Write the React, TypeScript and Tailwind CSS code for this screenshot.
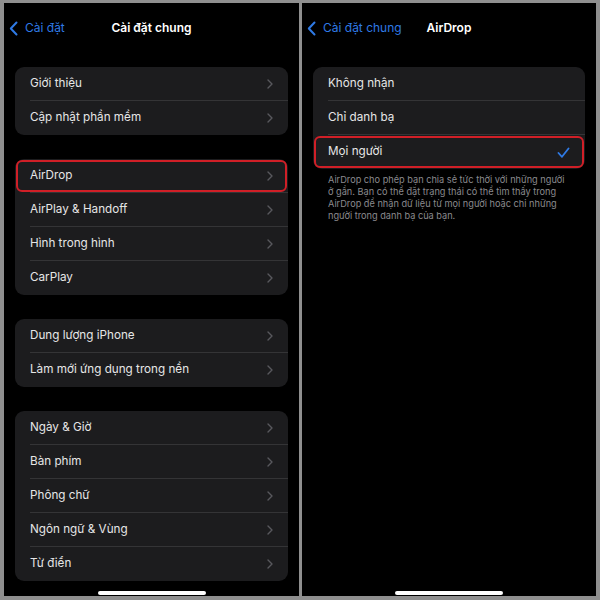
import React from 'react';

const font = { fontFamily: 'Inter, "Noto Sans", sans-serif' };

function Chevron() {
  return (
    <svg width="6" height="10" viewBox="0 0 6 10" className="shrink-0">
      <path d="M1 1l4 4-4 4" fill="none" stroke="#58585d" strokeWidth="1.4" strokeLinecap="round" strokeLinejoin="round" />
    </svg>
  );
}

function BackChevron() {
  return (
    <svg width="9" height="15" viewBox="0 0 9 15" className="shrink-0">
      <path d="M7.5 1.5L1.8 7.5l5.7 6" fill="none" stroke="#2f7ae5" strokeWidth="2" strokeLinecap="round" strokeLinejoin="round" />
    </svg>
  );
}

function Check() {
  return (
    <svg width="13" height="11" viewBox="0 0 13 11">
      <path d="M1.5 6l3.5 3.8L11.5 1.5" fill="none" stroke="#2f7ae5" strokeWidth="1.8" strokeLinecap="round" strokeLinejoin="round" />
    </svg>
  );
}

type Row = { label: string; mark?: boolean; check?: boolean };

function Group({ rows, chevrons = true }: { rows: Row[]; chevrons?: boolean }) {
  return (
    <div className="mx-[11px] rounded-[9px] bg-[#1c1c1e]">
      {rows.map((r, i) => (
        <div key={r.label} className="relative h-[34px] flex items-center pl-[15px]">
          <div
            className={
              'flex h-full flex-1 items-center pr-[15px] ' +
              (i < rows.length - 1 ? 'border-b border-[#343436]' : '')
            }
          >
            <span className="flex-1 text-[11.7px] text-[#e6e6e6]">{r.label}</span>
            {chevrons && <Chevron />}
            {r.check && <Check />}
          </div>
          {r.mark && (
            <div className="pointer-events-none absolute inset-[1px] rounded-[6px] border-2 border-[#d01f27]" />
          )}
        </div>
      ))}
    </div>
  );
}

function Header({ back, title }: { back: string; title: string }) {
  return (
    <div className="relative flex h-[50px] items-center">
      <div className="flex items-center gap-[7px] pl-[5px]">
        <BackChevron />
        <span className="text-[12px] text-[#2f7ae5]">{back}</span>
      </div>
      <div className="pointer-events-none absolute inset-0 flex items-center justify-center">
        <span className="text-[12px] font-semibold text-white">{title}</span>
      </div>
    </div>
  );
}

function HomeBar() {
  return (
    <div className="mt-auto flex justify-center pb-[1px]">
      <div className="h-[4px] w-[108px] rounded-full bg-white" />
    </div>
  );
}

export default function App() {
  return (
    <div className="flex h-[600px] w-[600px] gap-[3px] bg-[#8f8f8f] pb-[4px] pl-[4px] pr-[4px] pt-[3px]" style={font}>
      <div className="flex w-[295px] flex-col bg-black">
        <Header back="Cài đặt" title="Cài đặt chung" />
        <div className="mt-[14px] flex flex-col gap-[24px]">
          <Group rows={[{ label: 'Giới thiệu' }, { label: 'Cập nhật phần mềm' }]} />
          <Group
            rows={[
              { label: 'AirDrop', mark: true },
              { label: 'AirPlay & Handoff' },
              { label: 'Hình trong hình' },
              { label: 'CarPlay' },
            ]}
          />
          <Group rows={[{ label: 'Dung lượng iPhone' }, { label: 'Làm mới ứng dụng trong nền' }]} />
          <Group
            rows={[
              { label: 'Ngày & Giờ' },
              { label: 'Bàn phím' },
              { label: 'Phông chữ' },
              { label: 'Ngôn ngữ & Vùng' },
              { label: 'Từ điển' },
            ]}
          />
        </div>
        <HomeBar />
      </div>
      <div className="flex w-[294px] flex-col bg-black">
        <Header back="Cài đặt chung" title="AirDrop" />
        <div className="mt-[14px]">
          <Group
            chevrons={false}
            rows={[
              { label: 'Không nhận' },
              { label: 'Chỉ danh bạ' },
              { label: 'Mọi người', mark: true, check: true },
            ]}
          />
          <p className="mt-[5px] whitespace-nowrap pl-[26px] text-[9.2px] leading-[12px] text-[#8a8a8e]">
            AirDrop cho phép bạn chia sẻ tức thời với những người
            <br />ở gần. Bạn có thể đặt trạng thái có thể tìm thấy trong
            <br />AirDrop để nhận dữ liệu từ mọi người hoặc chỉ những
            <br />người trong danh bạ của bạn.
          </p>
        </div>
        <HomeBar />
      </div>
    </div>
  );
}
